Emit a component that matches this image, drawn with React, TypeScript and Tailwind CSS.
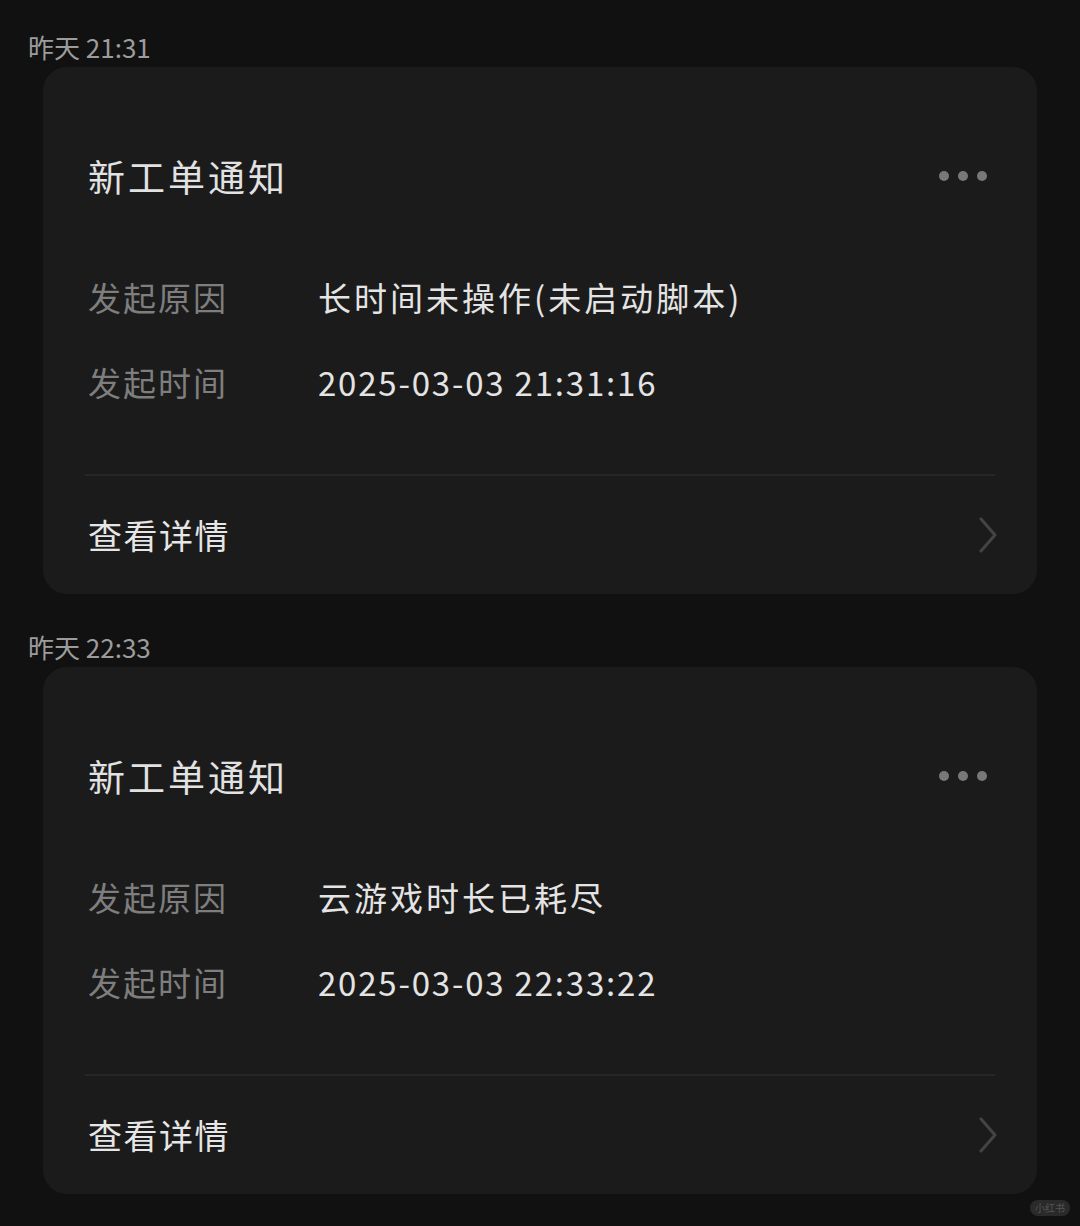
import React from "react";

const FONT = { fontFamily: '"Noto Sans CJK SC", "Noto Sans", sans-serif' };

type Item = { time: string; reason: string; at: string };

const items: Item[] = [
  { time: "昨天 21:31", reason: "长时间未操作(未启动脚本)", at: "2025-03-03 21:31:16" },
  { time: "昨天 22:33", reason: "云游戏时长已耗尽", at: "2025-03-03 22:33:22" },
];

function Card({ item }: { item: Item }) {
  return (
    <div className="flex flex-col">
      <div className="h-[67px] pl-[28px] pt-[32px] text-[26px] leading-[30px] text-[#9c9c9c]">
        {item.time}
      </div>
      <div className="mx-[43px] flex h-[527px] flex-col rounded-[24px] bg-[#1b1b1b] px-[42px]">
        <div className="mt-[79px] flex h-[60px] items-center justify-between pl-[3px]">
          <span className="text-[37px] leading-none tracking-[3px] text-[#e2e2e2]">新工单通知</span>
          <div className="mr-[8px] flex items-center gap-[9px]">
            <span className="h-[10px] w-[10px] rounded-full bg-[#787878]" />
            <span className="h-[10px] w-[10px] rounded-full bg-[#787878]" />
            <span className="h-[10px] w-[10px] rounded-full bg-[#787878]" />
          </div>
        </div>
        <div className="mt-[61px] flex flex-col gap-[25px] pl-[3px]">
          <div className="flex h-[60px] items-center text-[33px] leading-none">
            <span className="w-[230px] tracking-[2px] text-[#7e7e7e]">发起原因</span>
            <span className="tracking-[3px] text-[#e4e4e4]">{item.reason}</span>
          </div>
          <div className="flex h-[60px] items-center text-[33px] leading-none">
            <span className="w-[230px] tracking-[2px] text-[#7e7e7e]">发起时间</span>
            <span className="tracking-[1.8px] text-[#e4e4e4]">{item.at}</span>
          </div>
        </div>
        <div className="mt-[62px] h-[2px] bg-[#262626]" />
        <div className="flex flex-1 items-center justify-between pl-[3px]">
          <span className="text-[34px] leading-none tracking-[1.5px] text-[#e6e6e6]">查看详情</span>
          <svg width="20" height="36" viewBox="0 0 20 36" className="mr-[-3px]">
            <path d="M3 2 L17 18 L3 34" fill="none" stroke="#444444" strokeWidth="3" strokeLinecap="round" strokeLinejoin="round" />
          </svg>
        </div>
      </div>
    </div>
  );
}

export default function App() {
  return (
    <div className="relative h-[1226px] w-[1080px] overflow-hidden bg-[#111111]" style={FONT}>
      {items.map((it, i) => (
        <div key={i} className={i === 1 ? "mt-[6px]" : ""}>
          <Card item={it} />
        </div>
      ))}
      <div className="absolute right-[10px] bottom-[10px] rounded-full bg-[#2a2a2a] px-[5px] py-[1px] text-[10px] leading-[14px] text-[#555555]">
        小红书
      </div>
    </div>
  );
}
